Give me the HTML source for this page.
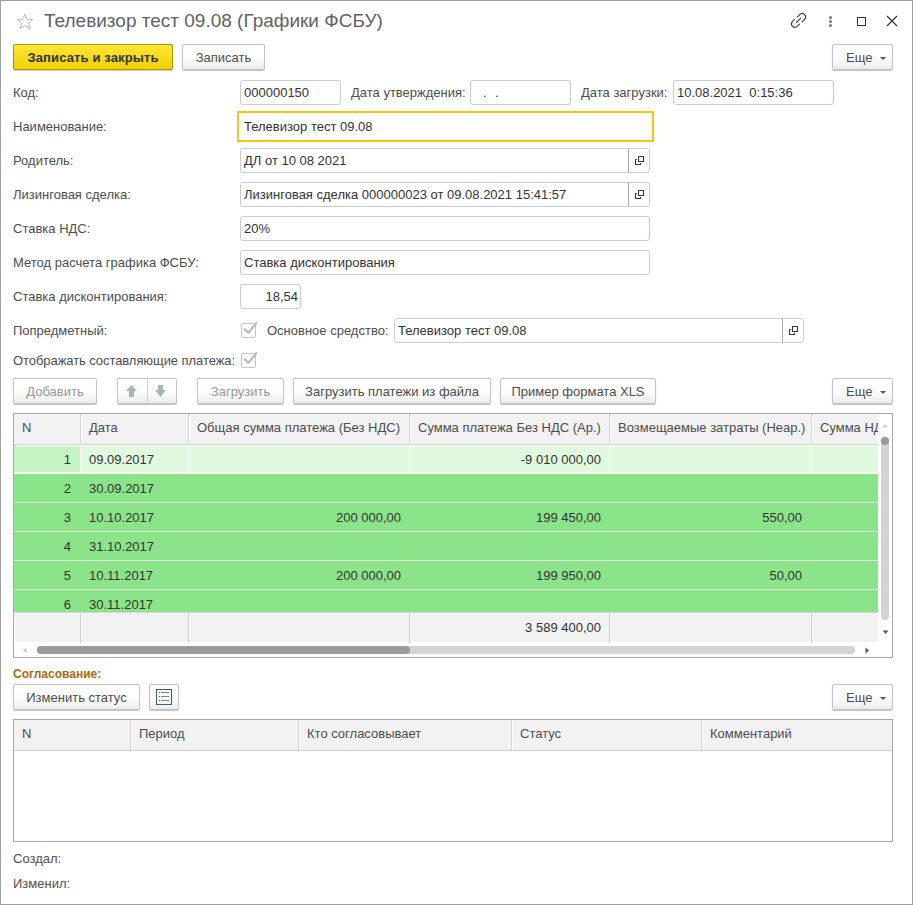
<!DOCTYPE html>
<html><head><meta charset="utf-8">
<style>
*{box-sizing:border-box}
html,body{margin:0;padding:0;background:#fff}
body{width:913px;height:905px;overflow:hidden;position:relative;font-family:"Liberation Sans",sans-serif;font-size:13px;color:#4d4d4d}
.win{position:absolute;left:0;top:0;width:913px;height:905px;border:1px solid #a0a0a0}
.a{position:absolute;white-space:nowrap;line-height:15px}
.lbl{color:#4d4d4d}
.fld{position:absolute;height:25px;border:1px solid #ccc;border-radius:3px;background:#fff;color:#333;padding:0 3px;line-height:23px;white-space:nowrap;overflow:hidden}
.btn{position:absolute;height:26px;border:1px solid #c4c4c4;border-radius:2px;background:linear-gradient(#fff 0%,#fff 45%,#ececec 100%);box-shadow:0 1px 1px rgba(0,0,0,.25);color:#4d4d4d;text-align:center;line-height:25px;white-space:nowrap}
.btn.dis{color:#979797}
.yb{position:absolute;height:26px;letter-spacing:0.13px;border:1px solid #a89300;border-radius:2px;background:linear-gradient(#ffe734,#f2d100);box-shadow:0 1px 1px rgba(0,0,0,.2);color:#333;font-weight:bold;text-align:center;line-height:25px;white-space:nowrap}
.sel{position:absolute;right:0;top:0;width:21px;height:23px;border-left:1px solid #a8a8a8}
.chk{position:absolute;width:15px;height:15px;border:1px solid #c4c4c4;border-radius:2px;background:#fff}
.tbl{position:absolute;border:1px solid #a8a8a8;background:#fff;overflow:hidden}
.hd{position:absolute;background:#f2f2f2;color:#4d4d4d}
.c{position:absolute;white-space:nowrap;line-height:15px}
.r{text-align:right}
</style></head><body>
<div class="win"></div>

<!-- title -->
<svg style="position:absolute;left:16px;top:13px" width="18" height="17" viewBox="0 0 18 17"><path d="M9 1.2 L11.1 6.3 L16.6 6.6 L12.4 10.1 L13.8 15.5 L9 12.5 L4.2 15.5 L5.6 10.1 L1.4 6.6 L6.9 6.3 Z" fill="none" stroke="#b8bec4" stroke-width="1"/></svg>
<div class="a" style="left:44px;top:10px;font-size:19px;line-height:22px;color:#626262">Телевизор тест 09.08 (Графики ФСБУ)</div>

<!-- title icons -->
<svg style="position:absolute;left:786px;top:8px" width="26" height="24" viewBox="0 0 26 24"><g fill="none" stroke="#444" stroke-width="1.15" stroke-linecap="round"><path d="M11.4 9 L14 6.4 A3.4 3.4 0 0 1 18.8 11.2 L16.5 13.5"/><path d="M8.5 11.4 L6.3 13.6 A3.4 3.4 0 0 0 11.1 18.4 L13.5 16.1"/><path d="M10.4 14.5 L14.7 10.2"/></g></svg>
<svg style="position:absolute;left:826px;top:14px" width="9" height="15" viewBox="0 0 9 15"><g fill="#777"><circle cx="4.5" cy="3.4" r="1.5"/><circle cx="4.5" cy="7.4" r="1.5"/><circle cx="4.5" cy="11.6" r="1.5"/></g></svg>
<div style="position:absolute;left:857px;top:17px;width:9px;height:9px;border:1.4px solid #333"></div>
<svg style="position:absolute;left:886px;top:15px" width="12" height="12" viewBox="0 0 12 12"><path d="M1 1 L11 11 M11 1 L1 11" stroke="#333" stroke-width="1.2"/></svg>

<!-- top buttons -->
<div class="yb" style="left:13px;top:44px;width:160px">Записать и закрыть</div>
<div class="btn" style="left:182px;top:44px;width:83px">Записать</div>
<div class="btn" style="left:832px;top:44px;width:61px;text-align:left;padding-left:13px">Еще<span style="position:absolute;left:47px;top:12px;border-left:3px solid transparent;border-right:3px solid transparent;border-top:3px solid #555"></span></div>

<!-- row 0 -->
<div class="a lbl" style="left:13px;top:85px">Код:</div>
<div class="fld" style="left:240px;top:80px;width:101px">000000150</div>
<div class="a lbl" style="left:351px;top:85px">Дата утверждения:</div>
<div class="fld" style="left:470px;top:80px;width:101px"></div><div class="a" style="left:483px;top:85px;color:#333">.</div><div class="a" style="left:495px;top:85px;color:#333">.</div>
<div class="a lbl" style="left:581px;top:85px">Дата загрузки:</div>
<div class="fld" style="left:673px;top:80px;width:161px">10.08.2021&nbsp;&nbsp;0:15:36</div>

<!-- row 1 -->
<div class="a lbl" style="left:13px;top:119px">Наименование:</div>
<div class="fld" style="left:237px;top:111px;width:417px;height:31px;border:2px solid #f6c511;border-radius:0;padding-left:5px;line-height:27px">Телевизор тест 09.08</div>

<!-- row 2 -->
<div class="a lbl" style="left:13px;top:153px">Родитель:</div>
<div class="fld" style="left:240px;top:148px;width:410px">ДЛ от 10 08 2021<div class="sel"><svg style="position:absolute;left:5px;top:6px" width="11" height="11" viewBox="0 0 11 11"><path d="M4.5 1.5H9.5V6.5H4.5Z M2.8 4.5H1.5V9.5H6.5V8" fill="none" stroke="#3a3a3a" stroke-width="1.15"/></svg></div></div>

<!-- row 3 -->
<div class="a lbl" style="left:13px;top:187px">Лизинговая сделка:</div>
<div class="fld" style="left:240px;top:182px;width:410px">Лизинговая сделка 000000023 от 09.08.2021 15:41:57<div class="sel"><svg style="position:absolute;left:5px;top:6px" width="11" height="11" viewBox="0 0 11 11"><path d="M4.5 1.5H9.5V6.5H4.5Z M2.8 4.5H1.5V9.5H6.5V8" fill="none" stroke="#3a3a3a" stroke-width="1.15"/></svg></div></div>

<!-- row 4 -->
<div class="a lbl" style="left:13px;top:221px">Ставка НДС:</div>
<div class="fld" style="left:240px;top:216px;width:410px">20%</div>

<!-- row 5 -->
<div class="a lbl" style="left:13px;top:255px">Метод расчета графика ФСБУ:</div>
<div class="fld" style="left:240px;top:250px;width:410px">Ставка дисконтирования</div>

<!-- row 6 -->
<div class="a lbl" style="left:13px;top:289px">Ставка дисконтирования:</div>
<div class="fld" style="left:240px;top:284px;width:61px;text-align:right;padding-right:2px">18,54</div>

<!-- row 7 -->
<div class="a lbl" style="left:13px;top:323px">Попредметный:</div>
<div class="chk" style="left:241px;top:323px"></div>
<svg style="position:absolute;left:241px;top:320px" width="18" height="18" viewBox="0 0 18 18"><path d="M3.6 9.2 L7.4 12.8 L15.2 3.2" fill="none" stroke="#bdbdbd" stroke-width="2.2" stroke-linecap="round" stroke-linejoin="round"/></svg>
<div class="a lbl" style="left:267px;top:323px">Основное средство:</div>
<div class="fld" style="left:394px;top:318px;width:410px">Телевизор тест 09.08<div class="sel"><svg style="position:absolute;left:5px;top:6px" width="11" height="11" viewBox="0 0 11 11"><path d="M4.5 1.5H9.5V6.5H4.5Z M2.8 4.5H1.5V9.5H6.5V8" fill="none" stroke="#3a3a3a" stroke-width="1.15"/></svg></div></div>

<!-- row 8 -->
<div class="a lbl" style="left:13px;top:353px;letter-spacing:-0.07px">Отображать составляющие платежа:</div>
<div class="chk" style="left:241px;top:353px"></div>
<svg style="position:absolute;left:241px;top:350px" width="18" height="18" viewBox="0 0 18 18"><path d="M3.6 9.2 L7.4 12.8 L15.2 3.2" fill="none" stroke="#bdbdbd" stroke-width="2.2" stroke-linecap="round" stroke-linejoin="round"/></svg>

<!-- table toolbar -->
<div class="btn dis" style="left:13px;top:378px;width:84px">Добавить</div>
<div class="btn" style="left:117px;top:378px;width:60px"></div>
<div style="position:absolute;left:147px;top:379px;width:1px;height:24px;background:#d0d0d0"></div>
<svg style="position:absolute;left:125px;top:384px" width="14" height="14" viewBox="0 0 14 14"><path d="M6.5 1 L12 7 L9 7 L9 13 L4 13 L4 7 L1 7 Z" fill="#a9b5bd"/></svg>
<svg style="position:absolute;left:154px;top:384px" width="14" height="14" viewBox="0 0 14 14"><path d="M4 1 L9 1 L9 6 L12 6 L6.5 13 L1 6 L4 6 Z" fill="#a9b5bd"/></svg>
<div class="btn dis" style="left:197px;top:378px;width:87px">Загрузить</div>
<div class="btn" style="left:293px;top:378px;width:198px">Загрузить платежи из файла</div>
<div class="btn" style="left:500px;top:378px;width:156px">Пример формата XLS</div>
<div class="btn" style="left:832px;top:378px;width:61px;text-align:left;padding-left:13px">Еще<span style="position:absolute;left:47px;top:12px;border-left:3px solid transparent;border-right:3px solid transparent;border-top:3px solid #555"></span></div>

<!-- table 1 -->
<div class="tbl" style="left:13px;top:413px;width:880px;height:245px" id="t1">
<div class="hd" style="left:0;top:0;width:864px;height:30px"></div>
<div style="position:absolute;left:0;top:30px;width:864px;height:1px;background:#cfcfcf"></div>
<div style="position:absolute;left:66px;top:0;width:1px;height:30px;background:#d4d4d4"></div>
<div style="position:absolute;left:67px;top:0;width:1px;height:30px;background:#fff"></div>
<div style="position:absolute;left:174px;top:0;width:1px;height:30px;background:#d4d4d4"></div>
<div style="position:absolute;left:175px;top:0;width:1px;height:30px;background:#fff"></div>
<div style="position:absolute;left:395px;top:0;width:1px;height:30px;background:#d4d4d4"></div>
<div style="position:absolute;left:396px;top:0;width:1px;height:30px;background:#fff"></div>
<div style="position:absolute;left:595px;top:0;width:1px;height:30px;background:#d4d4d4"></div>
<div style="position:absolute;left:596px;top:0;width:1px;height:30px;background:#fff"></div>
<div style="position:absolute;left:797px;top:0;width:1px;height:30px;background:#d4d4d4"></div>
<div style="position:absolute;left:798px;top:0;width:1px;height:30px;background:#fff"></div>
<div class="c" style="left:8px;top:6px">N</div>
<div class="c" style="left:75px;top:6px">Дата</div>
<div class="c" style="left:183px;top:6px">Общая сумма платежа (Без НДС)</div>
<div class="c" style="left:404px;top:6px">Сумма платежа Без НДС (Ар.)</div>
<div class="c" style="left:604px;top:6px">Возмещаемые затраты (Неар.)</div>
<div class="c" style="left:806px;top:6px;width:58px;overflow:hidden">Сумма НДС</div>
<div style="position:absolute;left:0;top:32px;width:66px;height:26px;background:#c6f3c4"></div>
<div style="position:absolute;left:67px;top:32px;width:797px;height:26px;background:#e1f9df"></div>
<div style="position:absolute;left:174px;top:32px;width:1px;height:26px;background:#fff"></div>
<div style="position:absolute;left:395px;top:32px;width:1px;height:26px;background:#fff"></div>
<div style="position:absolute;left:595px;top:32px;width:1px;height:26px;background:#fff"></div>
<div style="position:absolute;left:797px;top:32px;width:1px;height:26px;background:#fff"></div>
<div style="position:absolute;left:0;top:60px;width:864px;height:28px;background:#8ce48a"></div>
<div style="position:absolute;left:0;top:88px;width:864px;height:1px;background:#e0e8e0"></div>
<div style="position:absolute;left:0;top:89px;width:864px;height:28px;background:#8ce48a"></div>
<div style="position:absolute;left:0;top:117px;width:864px;height:1px;background:#e0e8e0"></div>
<div style="position:absolute;left:0;top:118px;width:864px;height:28px;background:#8ce48a"></div>
<div style="position:absolute;left:0;top:146px;width:864px;height:1px;background:#e0e8e0"></div>
<div style="position:absolute;left:0;top:147px;width:864px;height:28px;background:#8ce48a"></div>
<div style="position:absolute;left:0;top:175px;width:864px;height:1px;background:#e0e8e0"></div>
<div style="position:absolute;left:0;top:176px;width:864px;height:23px;background:#8ce48a"></div>
<div class="c r" style="right:821px;top:38px;color:#333">1</div>
<div class="c" style="left:75px;top:38px;color:#333">09.09.2017</div>
<div class="c r" style="right:291px;top:38px;color:#333">-9 010 000,00</div>
<div class="c r" style="right:821px;top:67px;color:#333">2</div>
<div class="c" style="left:75px;top:67px;color:#333">30.09.2017</div>
<div class="c r" style="right:821px;top:96px;color:#333">3</div>
<div class="c" style="left:75px;top:96px;color:#333">10.10.2017</div>
<div class="c r" style="right:491px;top:96px;color:#333">200 000,00</div>
<div class="c r" style="right:291px;top:96px;color:#333">199 450,00</div>
<div class="c r" style="right:90px;top:96px;color:#333">550,00</div>
<div class="c r" style="right:821px;top:125px;color:#333">4</div>
<div class="c" style="left:75px;top:125px;color:#333">31.10.2017</div>
<div class="c r" style="right:821px;top:154px;color:#333">5</div>
<div class="c" style="left:75px;top:154px;color:#333">10.11.2017</div>
<div class="c r" style="right:491px;top:154px;color:#333">200 000,00</div>
<div class="c r" style="right:291px;top:154px;color:#333">199 950,00</div>
<div class="c r" style="right:90px;top:154px;color:#333">50,00</div>
<div class="c r" style="right:821px;top:183px;color:#333">6</div>
<div class="c" style="left:75px;top:183px;color:#333">30.11.2017</div>
<div style="position:absolute;left:0;top:198px;width:864px;height:1px;background:#d8d8d8"></div>
<div style="position:absolute;left:0;top:199px;width:864px;height:30px;background:#fff"></div>
<div style="position:absolute;left:1px;top:199px;width:65px;height:29px;background:#f2f2f2"></div>
<div style="position:absolute;left:68px;top:199px;width:106px;height:29px;background:#f2f2f2"></div>
<div style="position:absolute;left:176px;top:199px;width:219px;height:29px;background:#f2f2f2"></div>
<div style="position:absolute;left:397px;top:199px;width:198px;height:29px;background:#f2f2f2"></div>
<div style="position:absolute;left:597px;top:199px;width:200px;height:29px;background:#f2f2f2"></div>
<div style="position:absolute;left:799px;top:199px;width:65px;height:29px;background:#f2f2f2"></div>
<div style="position:absolute;left:66px;top:199px;width:1px;height:30px;background:#d0d0d0"></div>
<div style="position:absolute;left:174px;top:199px;width:1px;height:30px;background:#d0d0d0"></div>
<div style="position:absolute;left:395px;top:199px;width:1px;height:30px;background:#d0d0d0"></div>
<div style="position:absolute;left:595px;top:199px;width:1px;height:30px;background:#d0d0d0"></div>
<div style="position:absolute;left:797px;top:199px;width:1px;height:30px;background:#d0d0d0"></div>
<div class="c r" style="right:291px;top:206px;color:#333">3 589 400,00</div>
<svg style="position:absolute;left:867px;top:9px" width="8" height="5" viewBox="0 0 8 5"><path d="M1 4.5 L4 1 L7 4.5Z" fill="#cfcfcf"/></svg>
<div style="position:absolute;left:867px;top:23px;width:8px;height:183px;border-radius:4px;background:#d4d4d4"></div>
<div style="position:absolute;left:867px;top:23px;width:8px;height:8px;border-radius:4px;background:#9a9a9a"></div>
<svg style="position:absolute;left:868px;top:216px" width="7" height="5" viewBox="0 0 7 5"><path d="M0.5 0.5 L6.5 0.5 L3.5 4Z" fill="#555"/></svg>
<svg style="position:absolute;left:8px;top:233px" width="5" height="7" viewBox="0 0 5 7"><path d="M4.5 0.5 L4.5 6.5 L1 3.5Z" fill="#c8c8c8"/></svg>
<div style="position:absolute;left:23px;top:232px;width:818px;height:8px;border-radius:4px;background:#d4d4d4"></div>
<div style="position:absolute;left:23px;top:232px;width:373px;height:8px;border-radius:4px;background:#9a9a9a"></div>
<svg style="position:absolute;left:851px;top:233px" width="5" height="7" viewBox="0 0 5 7"><path d="M0.5 0.5 L4 3.5 L0.5 6.5Z" fill="#555"/></svg>
</div>

<!-- approval -->
<div class="a" style="left:13px;top:667px;font-size:12px;font-weight:bold;color:#a96a0e">Согласование:</div>
<div class="btn" style="left:13px;top:684px;width:127px">Изменить статус</div>
<div class="btn" style="left:149px;top:684px;width:30px"></div>
<svg style="position:absolute;left:156px;top:689px" width="16" height="16" viewBox="0 0 16 16"><rect x="0.5" y="0.5" width="15" height="15" fill="none" stroke="#3d5d7e"/><g stroke="#3d5d7e"><path d="M3 3.5h1M3 7.5h1M3 11.5h1"/></g><g stroke="#6f87a0"><path d="M5 3.5h8M5 7.5h8M5 11.5h8"/></g></svg>
<div class="btn" style="left:832px;top:684px;width:61px;text-align:left;padding-left:13px">Еще<span style="position:absolute;left:47px;top:12px;border-left:3px solid transparent;border-right:3px solid transparent;border-top:3px solid #555"></span></div>

<div class="tbl" style="left:13px;top:719px;width:880px;height:123px" id="t2">
  <div class="hd" style="left:0;top:0;width:878px;height:31px;border-bottom:1px solid #cfcfcf"></div>
  <div style="position:absolute;left:116px;top:0;width:1px;height:30px;background:#d4d4d4"></div><div style="position:absolute;left:117px;top:0;width:1px;height:30px;background:#fff"></div>
  <div style="position:absolute;left:284px;top:0;width:1px;height:30px;background:#d4d4d4"></div><div style="position:absolute;left:285px;top:0;width:1px;height:30px;background:#fff"></div>
  <div style="position:absolute;left:497px;top:0;width:1px;height:30px;background:#d4d4d4"></div><div style="position:absolute;left:498px;top:0;width:1px;height:30px;background:#fff"></div>
  <div style="position:absolute;left:687px;top:0;width:1px;height:30px;background:#d4d4d4"></div><div style="position:absolute;left:688px;top:0;width:1px;height:30px;background:#fff"></div>
  <div class="c" style="left:8px;top:6px">N</div>
  <div class="c" style="left:125px;top:6px">Период</div>
  <div class="c" style="left:293px;top:6px">Кто согласовывает</div>
  <div class="c" style="left:506px;top:6px">Статус</div>
  <div class="c" style="left:696px;top:6px">Комментарий</div>
</div>

<div class="a lbl" style="left:13px;top:851px">Создал:</div>
<div class="a lbl" style="left:13px;top:876px">Изменил:</div>
</body></html>
